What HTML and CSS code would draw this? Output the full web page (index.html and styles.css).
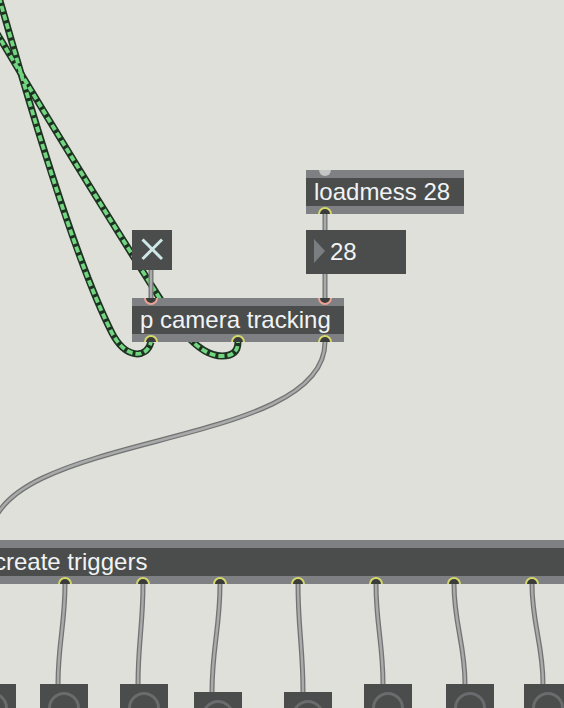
FILE: index.html
```html
<!DOCTYPE html>
<html>
<head>
<meta charset="utf-8">
<link rel="stylesheet" href="styles.css">
</head>
<body>
<div class="patch">
  <svg class="cables" width="564" height="708" viewBox="0 0 564 708">
    <g class="sig">
      <path d="M -6 -20 L 22 77 C 45 155, 80 270, 112 333 C 125 358, 146 360, 151 342"/>
      <path d="M -8 25 Q 60 140, 150 283 C 172 318, 195 356, 222 356 C 232 356, 238 352, 238 342"/>
    </g>
    <g class="sig-dash">
      <path d="M -6 -20 L 22 77 C 45 155, 80 270, 112 333 C 125 358, 146 360, 151 342"/>
      <path d="M -8 25 Q 60 140, 150 283 C 172 318, 195 356, 222 356 C 232 356, 238 352, 238 342"/>
    </g>
    <g class="msg">
      <path d="M 325 214 L 325 230"/>
      <path d="M 325 274 L 325 298"/>
      <path d="M 151 270 L 151 298"/>
      <path d="M 325 342 C 325 452, -10 430, -10 540"/>
      <path d="M 65 584 C 65 624, 58 644, 58 684"/>
      <path d="M 143 584 C 143 624, 138 644, 138 684"/>
      <path d="M 220 584 C 220 628, 212 648, 212 692"/>
      <path d="M 298 584 C 298 628, 303 648, 303 692"/>
      <path d="M 376 584 C 376 624, 383 644, 383 684"/>
      <path d="M 454 584 C 454 624, 465 644, 465 684"/>
      <path d="M 532 584 C 532 624, 543 644, 543 684"/>
    </g>
    <g class="msg-in">
      <path d="M 325 214 L 325 230"/>
      <path d="M 325 274 L 325 298"/>
      <path d="M 151 270 L 151 298"/>
      <path d="M 325 342 C 325 452, -10 430, -10 540"/>
      <path d="M 65 584 C 65 624, 58 644, 58 684"/>
      <path d="M 143 584 C 143 624, 138 644, 138 684"/>
      <path d="M 220 584 C 220 628, 212 648, 212 692"/>
      <path d="M 298 584 C 298 628, 303 648, 303 692"/>
      <path d="M 376 584 C 376 624, 383 644, 383 684"/>
      <path d="M 454 584 C 454 624, 465 644, 465 684"/>
      <path d="M 532 584 C 532 624, 543 644, 543 684"/>
    </g>
  </svg>

  <div class="obj o-loadmess">
    <div class="bar"><span class="port inlet-gray p-13"></span></div>
    <div class="body">loadmess 28</div>
    <div class="bar"><span class="port outlet p-12"></span></div>
  </div>

  <div class="numbox">
    <svg class="tri" width="14" height="26" viewBox="0 0 14 26"><polygon points="0,0 0,24 11,12"/></svg>
    <span class="num">28</span>
  </div>

  <div class="toggle">
    <svg width="40" height="40" viewBox="0 0 40 40">
      <path d="M 10.5 9.5 L 30 29 M 30 9.5 L 10.5 29"/>
    </svg>
  </div>

  <div class="obj o-camera">
    <div class="bar"><span class="port inlet p-12"></span><span class="port inlet p-186"></span></div>
    <div class="body">p camera tracking</div>
    <div class="bar"><span class="port outlet p-12"></span><span class="port outlet p-99"></span><span class="port outlet p-186"></span></div>
  </div>

  <div class="obj o-triggers">
    <div class="bar"></div>
    <div class="body">create triggers</div>
    <div class="bar">
      <span class="port outlet p-72"></span>
      <span class="port outlet p-150"></span>
      <span class="port outlet p-227"></span>
      <span class="port outlet p-305"></span>
      <span class="port outlet p-383"></span>
      <span class="port outlet p-461"></span>
      <span class="port outlet p-539"></span>
    </div>
  </div>

  <div class="btn b0"></div>
  <div class="btn b1"></div>
  <div class="btn b2"></div>
  <div class="btn b3"></div>
  <div class="btn b4"></div>
  <div class="btn b5"></div>
  <div class="btn b6"></div>
  <div class="btn b7"></div>
</div>
</body>
</html>
```

FILE: styles.css
```css
html, body {
  margin: 0;
  padding: 0;
  background: #dfe0da;
}
.patch {
  position: relative;
  width: 564px;
  height: 708px;
  overflow: hidden;
  background: #dfe0da;
  font-family: "Liberation Sans", Arial, sans-serif;
  font-size: 24px;
  color: #f1f3f5;
}
.cables {
  position: absolute;
  left: 0;
  top: 0;
}
.cables path {
  fill: none;
  stroke-linecap: butt;
}
.sig path {
  stroke: #1f3323;
  stroke-width: 7;
}
.sig-dash path {
  stroke: #72d680;
  stroke-width: 3.8;
  stroke-dasharray: 6 3;
}
.msg path {
  stroke: #727474;
  stroke-width: 5;
}
.msg-in path {
  stroke: #a9aaa9;
  stroke-width: 2.4;
}

/* objects */
.obj {
  position: absolute;
  display: flex;
  flex-direction: column;
  height: 44px;
}
.bar {
  position: relative;
  height: 8px;
  background: #7e8084;
  overflow: hidden;
}
.body {
  height: 28px;
  line-height: 28px;
  background: #4a4d4c;
  padding-left: 8px;
  white-space: nowrap;
}
.o-loadmess { left: 306px; top: 170px; width: 158px; }
.o-camera { left: 132px; top: 298px; width: 212px; }
.o-triggers { left: -14px; top: 540px; width: 600px; }

.port {
  position: absolute;
  width: 14px;
  height: 14px;
  box-sizing: border-box;
  border-radius: 50%;
  background: #3a3c3c;
}
.inlet {
  top: -7px;
  border: 2px solid #eba295;
}
.outlet {
  bottom: -7px;
  border: 2px solid #d6d96a;
}
.inlet-gray {
  top: -6px;
  width: 12px;
  height: 12px;
  background: #c3c4c4;
}
.p-12 { left: 12px; }
.p-13 { left: 13px; }
.p-99 { left: 99px; }
.p-186 { left: 186px; }
.p-72 { left: 72px; }
.p-150 { left: 150px; }
.p-227 { left: 227px; }
.p-305 { left: 305px; }
.p-383 { left: 383px; }
.p-461 { left: 461px; }
.p-539 { left: 539px; }

/* number box */
.numbox {
  position: absolute;
  left: 306px;
  top: 230px;
  width: 100px;
  height: 44px;
  background: #4a4d4c;
  display: flex;
  align-items: center;
}
.tri {
  margin-left: 8px;
  display: block;
}
.tri polygon { fill: #7b7e81; }
.num {
  margin-left: 2px;
  line-height: 44px;
}

/* toggle */
.toggle {
  position: absolute;
  left: 132px;
  top: 230px;
  width: 40px;
  height: 40px;
  background: #4a4d4c;
}
.toggle svg { display: block; }
.toggle path {
  stroke: #cde6e6;
  stroke-width: 3;
  fill: none;
}

/* buttons */
.btn {
  position: absolute;
  width: 48px;
  height: 48px;
  background: #4a4d4c;
}
.btn::after {
  content: "";
  position: absolute;
  left: 8px;
  top: 8px;
  width: 32px;
  height: 32px;
  box-sizing: border-box;
  border: 3px solid #696b6d;
  border-radius: 50%;
}
.b0 { left: -32px; top: 684px; }
.b1 { left: 40px; top: 684px; }
.b2 { left: 120px; top: 684px; }
.b3 { left: 194px; top: 692px; }
.b4 { left: 284px; top: 692px; }
.b5 { left: 364px; top: 684px; }
.b6 { left: 446px; top: 684px; }
.b7 { left: 524px; top: 684px; }
```
